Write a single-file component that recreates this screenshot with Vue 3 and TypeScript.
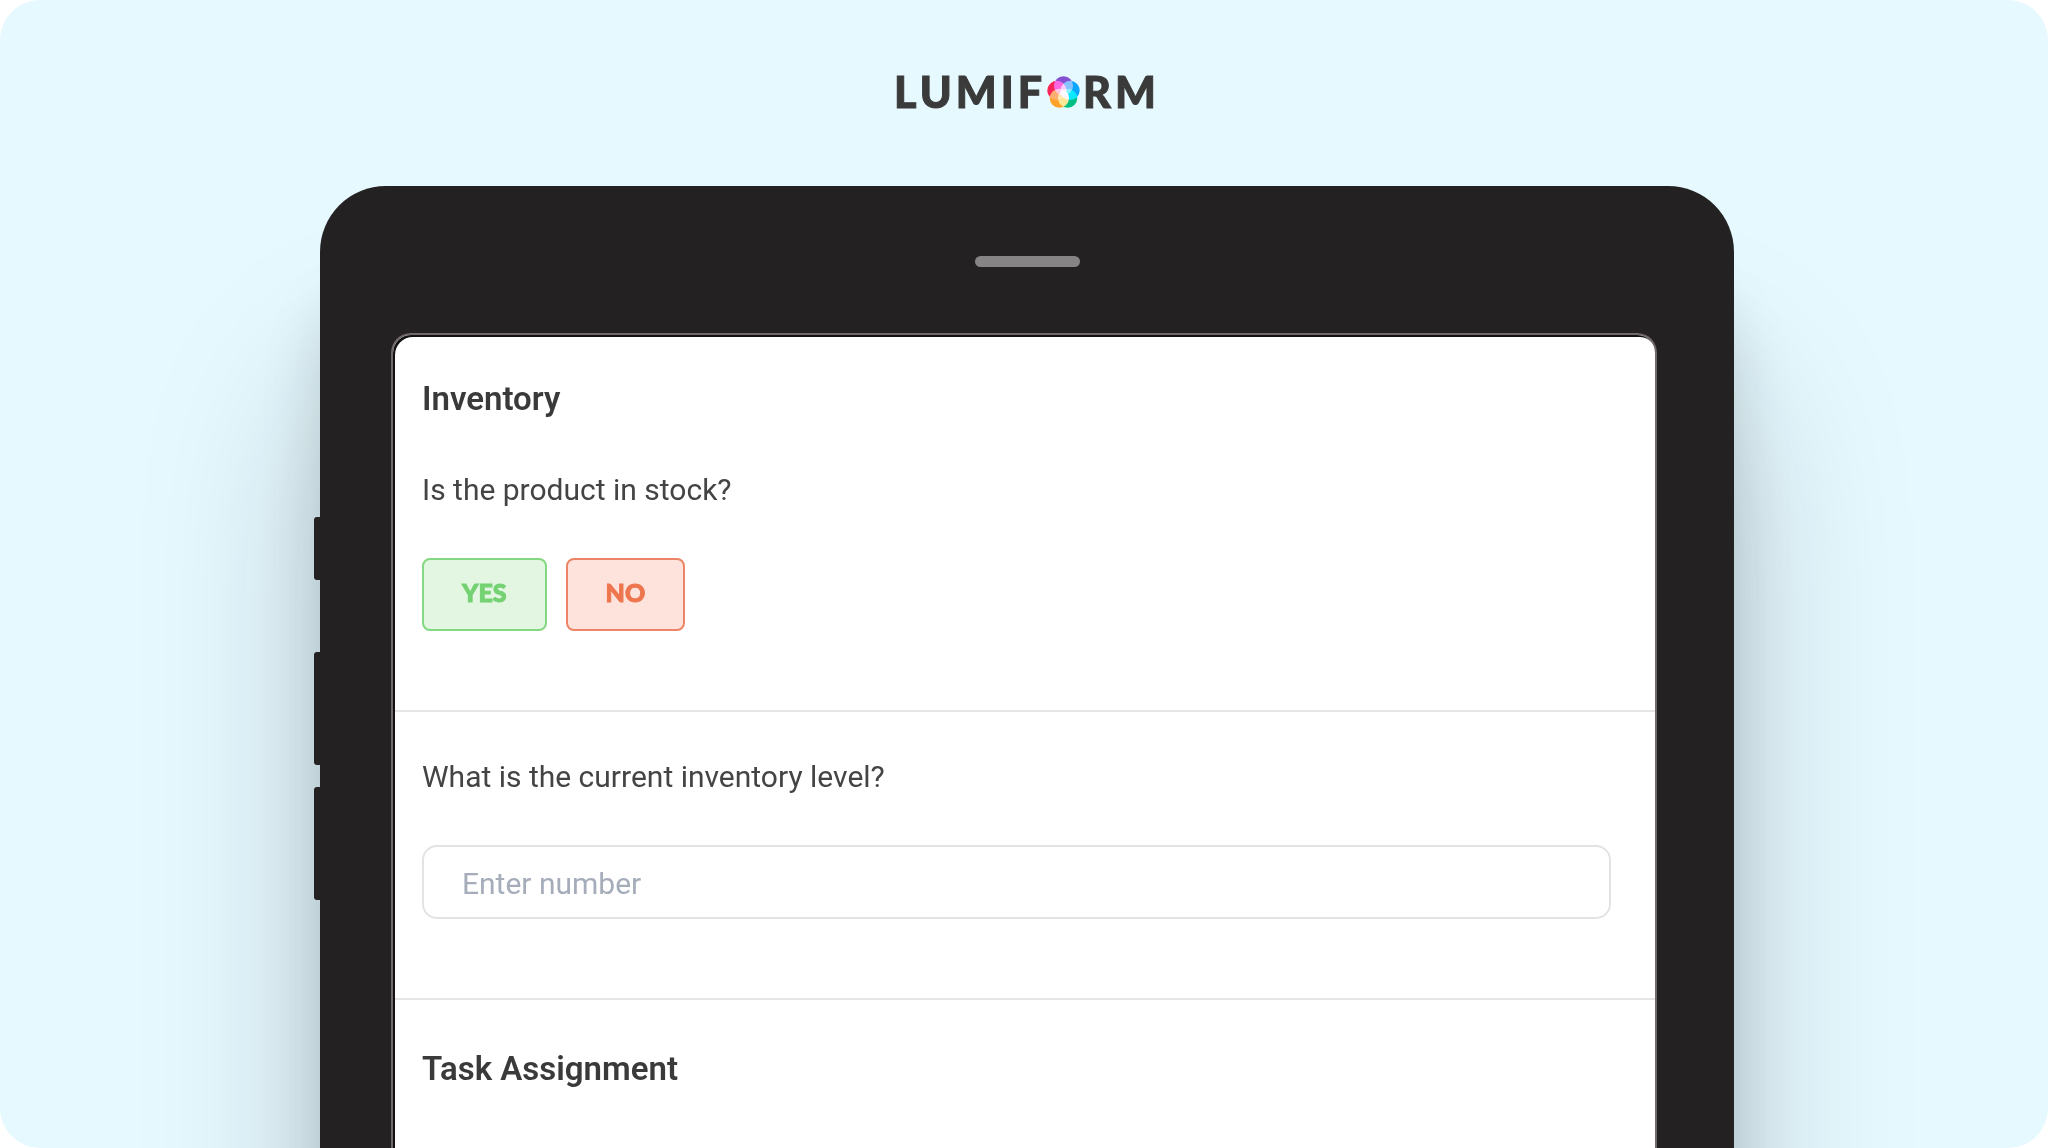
<script setup lang="ts">
import { ref } from 'vue'

interface Petal {
  cx: number
  cy: number
  fill: string
}

const petals: Petal[] = [
  { cx: 16, cy: 9.5, fill: '#8350d2' },
  { cx: 22.4, cy: 14, fill: '#0aa5ff' },
  { cx: 20, cy: 21.6, fill: '#00bf83' },
  { cx: 12, cy: 21.6, fill: '#ffa126' },
  { cx: 9.6, cy: 14, fill: '#fb2358' },
]

const inStock = ref<'yes' | 'no' | null>(null)
const level = ref('')
</script>

<template>
  <main class="stage">
    <header class="brand" aria-label="Lumiform">
      <span>LUMIF</span>
      <svg class="emblem" viewBox="0 0 32 32" aria-hidden="true">
        <g class="petals">
          <circle v-for="p in petals" :key="p.fill" :cx="p.cx" :cy="p.cy" r="9.3" :fill="p.fill" />
        </g>
      </svg>
      <span>RM</span>
    </header>

    <div class="device">
      <div class="side-keys" aria-hidden="true">
        <i class="key short"></i>
        <i class="key"></i>
        <i class="key"></i>
      </div>
      <div class="speaker"></div>
      <div class="screen">
        <section class="block first">
          <h2>Inventory</h2>
          <p class="question">Is the product in stock?</p>
          <div class="answers">
            <button type="button" class="answer yes" @click="inStock = 'yes'">YES</button>
            <button type="button" class="answer no" @click="inStock = 'no'">NO</button>
          </div>
        </section>
        <section class="block">
          <label class="question" for="level">What is the current inventory level?</label>
          <input id="level" v-model="level" class="field" type="text" inputmode="numeric" placeholder="Enter number" />
        </section>
        <section class="block titled">
          <h2>Task Assignment</h2>
        </section>
      </div>
    </div>
  </main>
</template>

<style>
body {
  background: #fff;
}
</style>

<style scoped>
.stage {
  box-sizing: border-box;
  height: 100vh;
  overflow: hidden;
  display: flex;
  flex-direction: column;
  padding: 66px 314px 0 320px;
  border-radius: 40px;
  background: #e6f9ff;
  font-family: Roboto, "Liberation Sans", sans-serif;
  color: #3a3a3a;
}

.brand {
  flex: none;
  display: flex;
  align-items: center;
  justify-content: center;
  height: 52px;
  margin-bottom: 68px;
  font: 900 43px/52px Lato, sans-serif;
  letter-spacing: 4px;
  -webkit-text-stroke: 1px currentColor;
}

.emblem {
  width: 33px;
  height: 33px;
  margin: 0 3px 0 1px;
}

.petals {
  isolation: isolate;
  stroke: none;
}

.petals circle {
  mix-blend-mode: screen;
}

.device {
  position: relative;
  box-sizing: border-box;
  flex: 1 0 auto;
  display: flex;
  flex-direction: column;
  padding: 70px 77px 0 71px;
  border-radius: 66px 66px 0 0;
  background: #242122;
  box-shadow:
    0 200px 180px rgba(20, 24, 28, 0.21),
    0 110px 60px rgba(20, 24, 28, 0.15);
}

.side-keys {
  position: absolute;
  top: 331px;
  right: 100%;
  display: flex;
  flex-direction: column;
}

.key {
  width: 6px;
  height: 113px;
  margin-bottom: 22px;
  border-radius: 3px 0 0 3px;
  background: #242122;
}

.key.short {
  height: 63px;
  margin-bottom: 72px;
}

.speaker {
  width: 105px;
  height: 11px;
  margin: 0 auto 66px;
  border-radius: 6px;
  background: #868485;
  translate: 3px 0;
}

.screen {
  flex: 1;
  border: 2px solid #6f6769;
  border-bottom: 0;
  border-radius: 20px 20px 0 0;
  box-shadow: inset 2px 2px 0 #111;
  background: #fff;
  padding: 2px 0 0 2px;
}

.block {
  padding: 45px 44px 79px 27px;
}

.block.first {
  padding-top: 42px;
}

.block.titled {
  padding-top: 49px;
}

.block + .block {
  border-top: 2px solid #e5e5e5;
}

h2 {
  margin: 0 0 51px;
  font-size: 33px;
  font-weight: 600;
  line-height: 40px;
}

.question {
  display: block;
  margin: 0 0 48px;
  font-size: 30px;
  line-height: 40px;
  color: #444;
}

.answers {
  display: flex;
  gap: 19px;
}

.answer {
  height: 73px;
  padding: 0 38px 5px;
  border: 2px solid;
  border-radius: 8px;
  font: 900 25px/32px Lato, sans-serif;
  -webkit-text-stroke: 1px currentColor;
}

.yes {
  border-color: #82d982;
  background: #e3f6e2;
  color: #74d272;
}

.no {
  border-color: #ec8465;
  background: #fde3db;
  color: #ee764f;
}

.field {
  box-sizing: border-box;
  display: block;
  width: 100%;
  height: 74px;
  padding: 2px 38px 0;
  border: 2px solid #e3e3e3;
  border-radius: 15px;
  background: #fff;
  font: 30px/40px Roboto, "Liberation Sans", sans-serif;
  color: #3a3a3a;
}

.field::placeholder {
  color: #a6adba;
  opacity: 1;
}
</style>
